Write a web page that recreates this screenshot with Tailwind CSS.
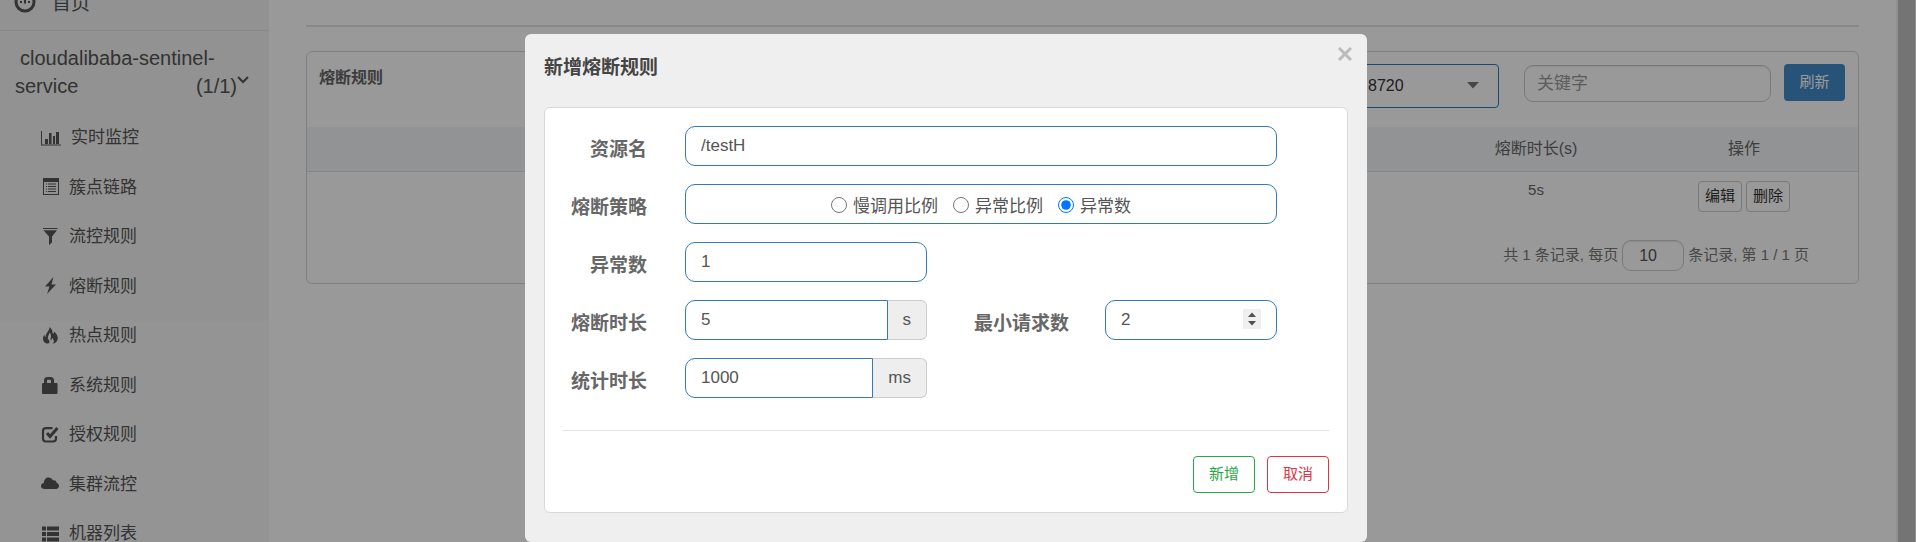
<!DOCTYPE html>
<html lang="zh-CN">
<head>
<meta charset="utf-8">
<title>熔断规则</title>
<script src="https://cdn.jsdelivr.net/npm/@tailwindcss/browser@4"></script>
</head>
<body class="relative h-screen overflow-hidden bg-white font-['Liberation_Sans','Noto_Sans_CJK_SC',sans-serif] text-[17px] text-[#555]">

<div class="flex h-full items-stretch">
  <!-- Sidebar -->
  <nav class="w-[269px] shrink-0 overflow-hidden bg-[#f7f7f7] text-[#555]">
    <div class="bg-[#f3f3f3]">
    <a href="#" class="flex h-[31px] items-start gap-4 border-b border-[#e4e4e4] pl-3.5 text-[19px] leading-5">
      <svg class="-mt-2 size-[22px]" viewBox="0 0 22 22" fill="none" stroke="#555" stroke-width="3"><circle cx="11" cy="10" r="9"/><path d="M11 11.500V7M7 9v2M15 9v2" stroke-width="2"/></svg>
      <span class="-mt-1.5">首页</span>
    </a>
    <a href="#" class="block h-[82px] pt-[13px] pr-5 pl-[15px] text-[20px] leading-7">
      <span class="block pl-[5px]">cloudalibaba-sentinel-</span>
      <span class="flex justify-between">service <span class="flex">(1/1)<svg class="mt-1 size-3" viewBox="0 0 12 12" fill="none" stroke="#555" stroke-width="2"><path d="M1 1l5 5 5-5"/></svg></span></span>
    </a>
    </div>
    <ul class="grid h-[446px] auto-rows-fr bg-linear-to-b from-[#f3f3f3] from-[208px] to-[#f7f7f7] to-[208px] pl-[41px]">
      <li><a href="#" class="flex h-full items-center gap-2.5">
        <svg class="h-4 w-5" viewBox="0 0 20 16" fill="#555"><path d="M0 1h1v13.500h19v1H0zM4 9h3v5H4zM8 3h2.500v11H8zM12 6h2v8h-2zM15 2h3v12h-3z"/></svg>实时监控</a></li>
      <li><a href="#" class="flex h-full items-center gap-2.5">
        <svg class="h-[18px] w-[18px]" viewBox="0 0 18 18" fill="#555"><path fill-rule="evenodd" d="M2 0h16v17H2zM3 4v12h14V4zM5 5.500h1v1h-1zM7 5.500h8v1H7zM5 8h1v1h-1zM7 8h8v1H7zM5 10.500h1v1h-1zM7 10.500h8v1H7zM5 13h1v1h-1zM7 13h8v1H7z"/></svg>簇点链路</a></li>
      <li><a href="#" class="flex h-full items-center gap-2.5">
        <svg class="h-[18px] w-[18px]" viewBox="0 0 18 18" fill="#555"><path d="M2 0h14.500v1H2zM2.500 2.200h13.500L11 8.500v6L8 17V8.500z"/></svg>流控规则</a></li>
      <li><a href="#" class="flex h-full items-center gap-2.5">
        <svg class="h-[18px] w-[18px]" viewBox="0 0 18 18" fill="#555"><path d="M12.500 0L4 9.500h4.500L6 17l9-9.500h-4.500z"/></svg>熔断规则</a></li>
      <li><a href="#" class="flex h-full items-center gap-2.5">
        <svg class="h-[18px] w-[18px]" viewBox="0 0 18 18" fill="#555"><path d="M8.500 0c2 1.500 3 3.500 3 5.500 0 1 .5 1.500 1 1 .4-.5.500-1.200.3-2C15.500 6.500 17 9 16.800 11.500c-.3 3-2.500 5-5.500 5.500 1.500-1 2-2.500 1.200-4-.4-.8-.8-1.200-.8-2-1 .6-1.500 1.500-1.300 2.500-.8-.3-1-1-.8-2C10.500 9 10 6.500 8.500 5.500c0 2-1.700 3-1.700 5.500 0 1.500 1.700 2 1.700 3.500 0 1-.5 1.800-1.500 2C4 16.500 2 14.500 2 11.500c0-1.500.5-2.700 1.500-3.700 0 1.200.3 2 1 2.200C4.500 6 8.500 4 8.500 0z"/></svg>热点规则</a></li>
      <li><a href="#" class="flex h-full items-center gap-2.5">
        <svg class="h-[18px] w-[18px]" viewBox="0 0 18 18" fill="#555"><path fill-rule="evenodd" d="M3 6V3.500Q3 0 6.500 0h3Q13 0 13 3.500V6h2.500q1 0 1 1v9q0 1-1 1H2q-1 0-1-1V7q0-1 1-1zm3 0h4V3.500Q10 2.700 9.200 2.700H6.800Q6 2.700 6 3.500z"/></svg>系统规则</a></li>
      <li><a href="#" class="flex h-full items-center gap-2.5">
        <svg class="h-[18px] w-[18px]" viewBox="0 0 18 18" fill="none" stroke="#555"><path d="M11.500 2.200H5Q2 2.200 2 5v7.500q0 3 3 3h7q3 0 3-3V10" stroke-width="2.200"/><path d="M6 7l3 3.500 7.500-8.500" stroke-width="3"/></svg>授权规则</a></li>
      <li><a href="#" class="flex h-full items-center gap-2.5">
        <svg class="h-[18px] w-[18px]" viewBox="0 0 18 18" fill="#555"><path d="M4 13c-2.500 0-4-1.200-4-3s1.500-3 3-3.300C3 3.500 5 1.500 7.500 1.500c2 0 3.500 1 4.300 2.700 2.700-.4 3.700 1 3.700 2.600C17 7.200 18 8.500 18 10s-1.300 3-3 3z"/></svg>集群流控</a></li>
      <li><a href="#" class="flex h-full items-center gap-2.5">
        <svg class="h-[18px] w-[18px]" viewBox="0 0 18 18" fill="#555"><path d="M1 1.500h4v4H1zM6 1.500h12v4H6zM1 7h4v4H1zM6 7h12v4H6zM1 12.500h4v4H1zM6 12.500h12v4H6z"/></svg>机器列表</a></li>
    </ul>
  </nav>

  <!-- Page content -->
  <main class="min-w-0 flex-1 px-[37px] pt-[25px]">
    <hr class="mb-6 border-t-2 border-[#e3e3e3]">
    <section class="rounded-md border border-[#d6d6d6]">
      <header class="flex h-[75px] items-start pt-3 pr-[13px] pl-3">
        <h2 class="pt-0.5 text-[16px] leading-6 font-bold text-[#676767]">熔断规则</h2>
        <div class="relative ml-auto">
          <select aria-label="机器" class="h-11 w-[280px] appearance-none rounded border border-[#337ab7] bg-white pl-[148px] text-[16px] text-[#333]"><option>8720</option></select>
          <svg class="pointer-events-none absolute top-[18px] right-5 h-[7px] w-3" viewBox="0 0 12 7" fill="#777"><path d="M0 0h12L6 6.500z"/></svg>
        </div>
        <input type="text" aria-label="关键字" placeholder="关键字" class="mt-px ml-[25px] h-[37px] w-[247px] rounded-[9px] border border-[#ccc] bg-white px-3 text-[17px] shadow-[inset_0_1px_1px_rgba(0,0,0,0.08)] placeholder:text-[#999]">
        <button class="ml-[13px] h-[37px] w-[61px] rounded bg-[#428bca] text-[15px] text-white">刷新</button>
      </header>
      <table class="w-full table-fixed text-center text-[16px] text-[#676767]">
        <thead>
          <tr class="h-11 border-b border-[#dcdfe2] bg-[#f2f5f8]">
            <th></th>
            <th class="w-[188px] font-normal">熔断时长(s)</th>
            <th class="w-[228px] font-normal">操作</th>
          </tr>
        </thead>
        <tbody>
          <tr class="h-[57px] align-top">
            <td></td>
            <td class="pt-1.5 text-[15px] leading-6">5s</td>
            <td class="pt-[9px]">
              <div class="flex justify-center gap-1 text-[15px] text-[#333]">
                <button class="h-[31px] w-11 rounded-sm border border-[#ccc]">编辑</button>
                <button class="h-[31px] w-11 rounded-sm border border-[#ccc]">删除</button>
              </div>
            </td>
          </tr>
        </tbody>
      </table>
      <footer class="flex h-[55px] items-center justify-end pr-[49px] text-[15px] text-[#777]">
        <label for="size" class="pr-1">共 1 条记录, 每页</label>
        <input id="size" type="text" value="10" class="mr-1 h-[31px] w-[62px] rounded-[9px] border border-[#ccc] pl-4 text-[16px] text-[#555] shadow-[inset_0_1px_1px_rgba(0,0,0,0.08)]">
        <span>条记录, 第 1 / 1 页</span>
      </footer>
    </section>
  </main>

  <!-- Scrollbar -->
  <div class="w-5 shrink-0 bg-[#f1f1f1] pr-px pl-0.5"><div class="h-full bg-[#c1c1c1]"></div></div>
</div>

<!-- Dialog -->
<div class="absolute inset-0 flex items-start justify-center bg-black/40 pt-[34px] pr-6">
  <div role="dialog" aria-labelledby="dlg" class="relative w-[842px] rounded-md bg-[#efefef] px-[19px] pb-[29px]">
    <button aria-label="关闭" class="absolute top-[13px] right-[15px] size-3.5">
      <svg class="size-3.5" viewBox="0 0 14 14" stroke="#bbb" stroke-width="3"><path d="M1 1l12 12M13 1L1 13"/></svg>
    </button>
    <h1 id="dlg" class="flex h-[73px] items-start pt-5 text-[19px] leading-7 font-bold text-[#444]">新增熔断规则</h1>

    <form class="rounded-md border border-[#d8d8d8] bg-white px-[18px] pt-[18px] pb-[19px]">
      <div class="flex flex-col gap-[18px]">
        <div class="flex">
          <label for="res" class="mr-[38px] w-[84px] pt-2.5 text-right text-[19px] leading-7 font-bold text-[#676767]">资源名</label>
          <input id="res" type="text" value="/testH" class="h-10 w-[592px] rounded-[10px] border border-[#337ab7] px-[15px]">
        </div>
        <div class="flex">
          <span class="mr-[38px] w-[84px] pt-2.5 text-right text-[19px] leading-7 font-bold text-[#676767]">熔断策略</span>
          <div role="radiogroup" aria-label="熔断策略" class="flex h-10 w-[592px] items-center justify-center gap-[15px] rounded-[10px] border border-[#337ab7] pt-1.5">
            <label class="flex items-center gap-1.5"><input type="radio" name="grade" class="mb-1 size-4"><span>慢调用比例</span></label>
            <label class="flex items-center gap-1.5"><input type="radio" name="grade" class="mb-1 size-4"><span>异常比例</span></label>
            <label class="flex items-center gap-1.5"><input type="radio" name="grade" checked class="mb-1 size-4"><span>异常数</span></label>
          </div>
        </div>
        <div class="flex">
          <label for="count" class="mr-[38px] w-[84px] pt-2.5 text-right text-[19px] leading-7 font-bold text-[#676767]">异常数</label>
          <input id="count" type="text" value="1" class="h-10 w-[242px] rounded-[10px] border border-[#337ab7] px-[15px]">
        </div>
        <div class="flex">
          <label for="window" class="mr-[38px] w-[84px] pt-2.5 text-right text-[19px] leading-7 font-bold text-[#676767]">熔断时长</label>
          <div class="flex h-10 w-[242px]">
            <input id="window" type="text" value="5" class="min-w-0 flex-1 rounded-l-[10px] border border-[#337ab7] px-[15px]">
            <span class="flex items-center rounded-r-md border border-l-0 border-[#ccc] bg-[#eee] px-[15px]">s</span>
          </div>
          <label for="min" class="mr-9 ml-[46px] w-24 pt-2.5 text-right text-[19px] leading-7 font-bold text-[#676767]">最小请求数</label>
          <div class="relative">
            <input id="min" type="number" value="2" class="h-10 w-[172px] appearance-none rounded-[10px] border border-[#337ab7] px-[15px] [&::-webkit-inner-spin-button]:appearance-none">
            <svg class="pointer-events-none absolute top-[9px] right-4 h-5 w-[18px] bg-[#efefef]" viewBox="0 0 18 20" fill="#505050"><path d="M5 8l4-4.500L13 8zM5 12l4 4.500 4-4.500z"/></svg>
          </div>
        </div>
        <div class="flex">
          <label for="stat" class="mr-[38px] w-[84px] pt-2.5 text-right text-[19px] leading-7 font-bold text-[#676767]">统计时长</label>
          <div class="flex h-10 w-[242px]">
            <input id="stat" type="text" value="1000" class="min-w-0 flex-1 rounded-l-[10px] border border-[#337ab7] px-[15px]">
            <span class="flex items-center rounded-r-md border border-l-0 border-[#ccc] bg-[#eee] px-[15px]">ms</span>
          </div>
        </div>
      </div>
      <hr class="mt-8 mb-[25px] border-[#e3e3e3]">
      <div class="flex justify-end gap-3 text-[15px]">
        <button type="button" class="h-[37px] w-[62px] rounded border border-[#28a745] text-[#28a745]">新增</button>
        <button type="button" class="h-[37px] w-[62px] rounded border border-[#dc3545] text-[#dc3545]">取消</button>
      </div>
    </form>
  </div>
</div>
</body>
</html>
